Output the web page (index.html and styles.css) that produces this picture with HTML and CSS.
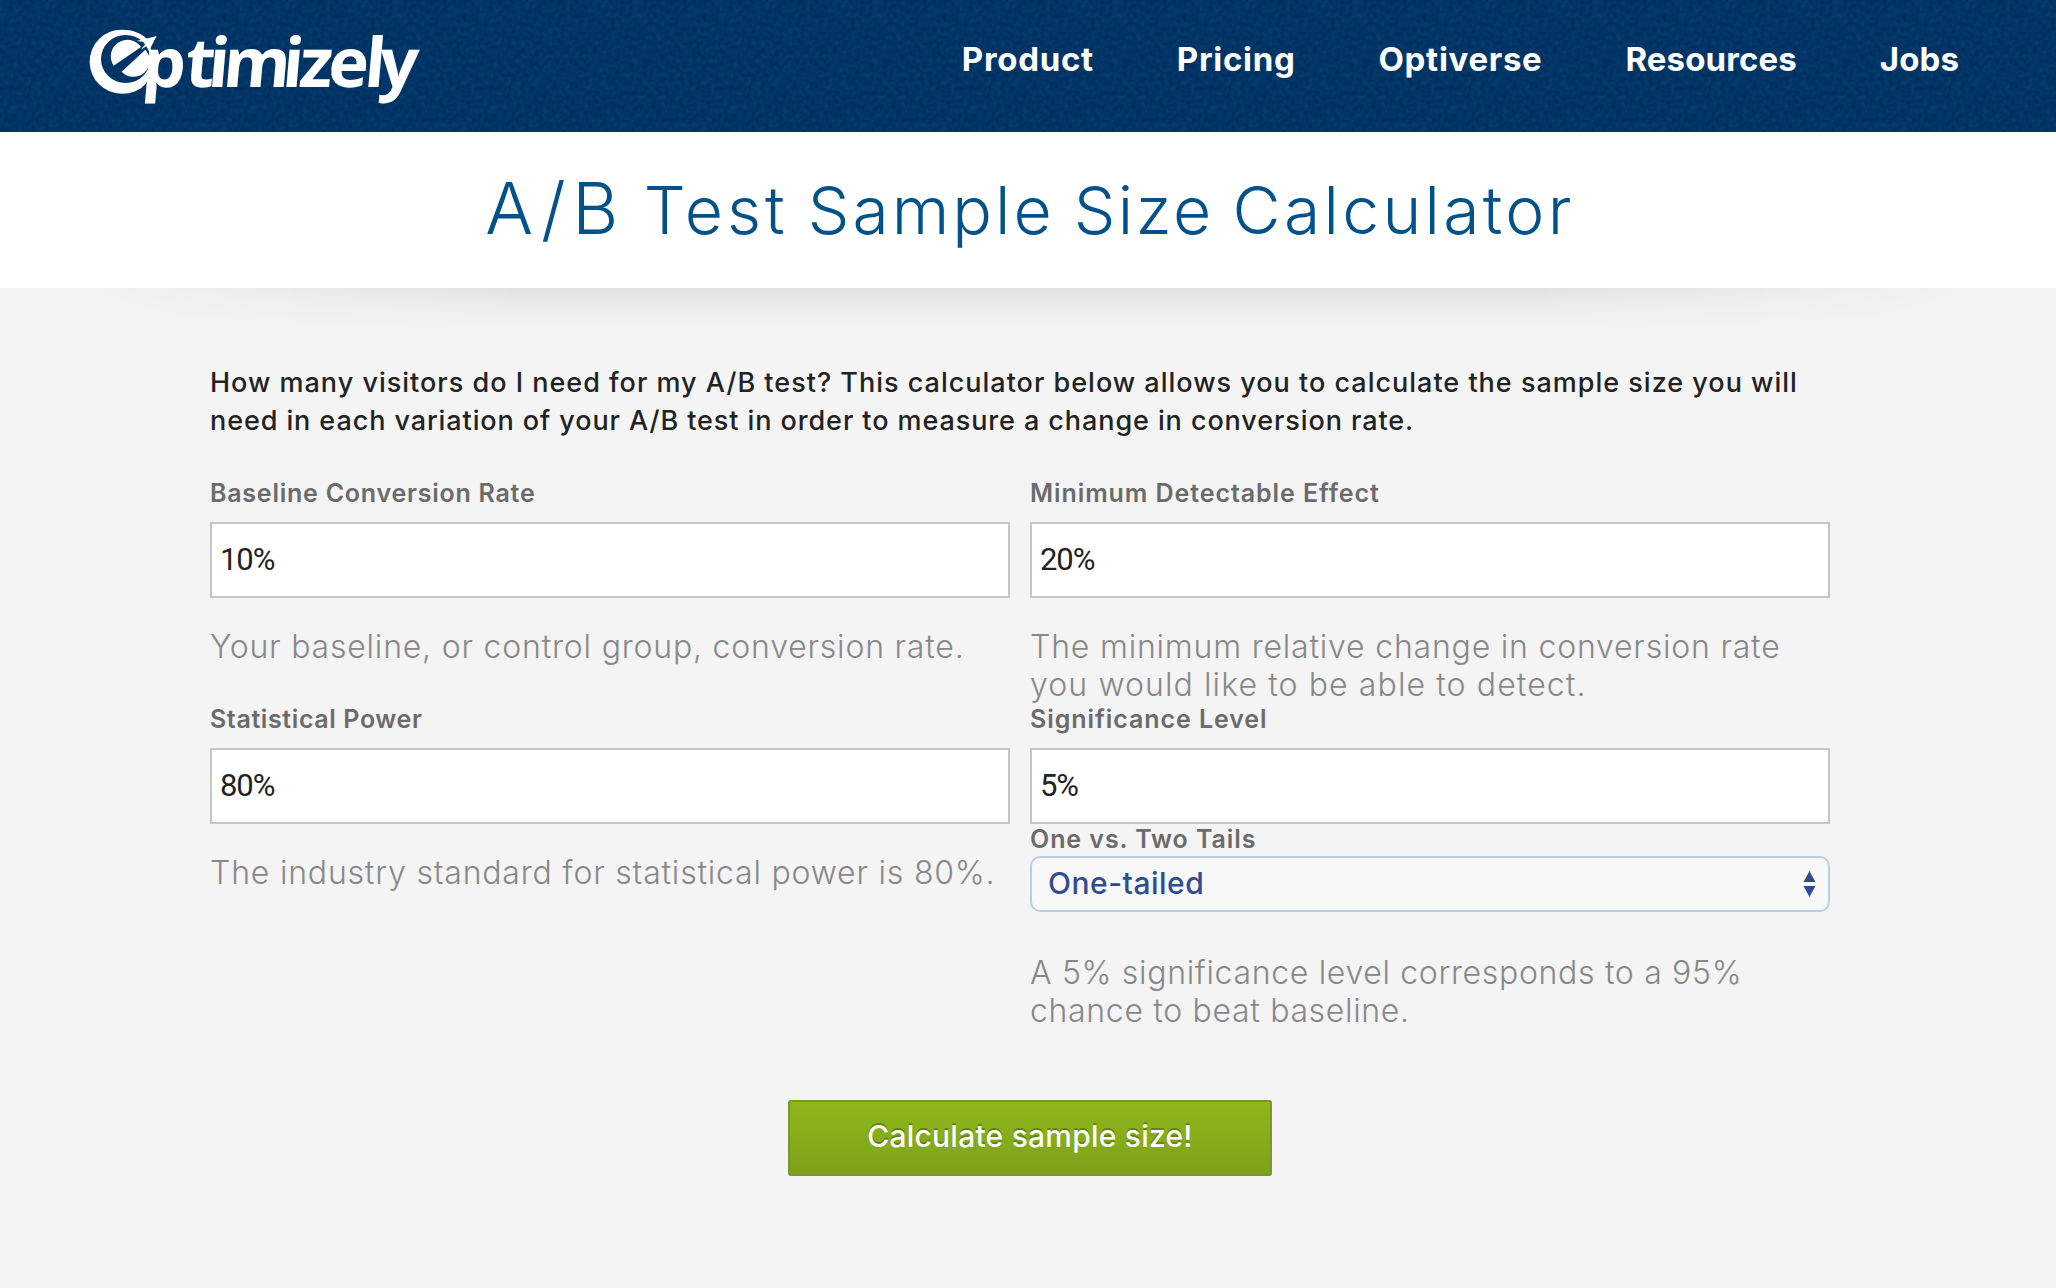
FILE: index.html
```html
<!DOCTYPE html>
<html lang="en">
<head>
<meta charset="utf-8">
<title>A/B Test Sample Size Calculator</title>
<link rel="stylesheet" href="styles.css">
</head>
<body>
<header class="topbar">
  <a class="logo" aria-label="Optimizely">
    <svg width="340" height="80" viewBox="55 55 1020 240">
      <path fill="#fff" fill-rule="evenodd" d="M150 60C182 60 209 70 226 88L254 80L236 112C250 150 245 190 222 222C205 242 180 252 150 252A96 96 0 0 1 150 60ZM162 76A74 72 0 1 0 162 220A74 72 0 1 0 162 76Z"/>
      <path fill="#fff" d="M126 168A47 47 0 0 1 208 112ZM150 186L221 120A47 47 0 0 1 150 186Z"/>
      <path fill="#fff" d="M194 94L254 80L232 124L224 110L207 120L226 98Z"/>
      <text class="logo-text" transform="translate(20.3 0) skewX(-5)" y="232" x="208 336 405 450 628 678 765 874 918">ptimizely</text>
    </svg>
  </a>
  <nav class="nav">
    <a>Product</a><a>Pricing</a><a>Optiverse</a><a class="tight">Resources</a><a class="tight">Jobs</a>
  </nav>
</header>
<section class="title"><h1><span class="ab">A/B</span> <span class="test">Test</span> Sample <span class="size">Size</span> <span class="calc">Calculator</span></h1></section>
<main class="main">
  <p class="intro">How many visitors do I need for my A/B test? This calculator below allows you to calculate the sample size you will<br><span class="intro-end">need in each variation of your A/B test in order to measure a change in conversion rate.</span></p>
  <form class="fields">
    <div class="field">
      <label for="baseline">Baseline Conversion Rate</label>
      <input id="baseline" value="10%">
      <p class="help">Your baseline, or control group, conversion rate.</p>
    </div>
    <div class="field">
      <label class="wide" for="effect">Minimum Detectable Effect</label>
      <input id="effect" value="20%">
      <p class="help">The minimum relative change in conversion rate<br><span class="loose">you would like to be able to detect.</span></p>
    </div>
    <div class="field">
      <label class="narrow" for="power">Statistical Power</label>
      <input id="power" value="80%">
      <p class="help">The industry standard for statistical power is 80%.</p>
    </div>
    <div class="field">
      <label class="wide" for="level">Significance Level</label>
      <input id="level" value="5%">
      <label class="wide short" for="tails">One vs. Two Tails</label>
      <div class="select">
        <select id="tails"><option>One-tailed</option><option>Two-tailed</option></select>
        <svg class="arrows" width="13" height="28" viewBox="0 0 13 28"><path fill="#324d8f" d="M6.5 1L12.5 12H.5ZM.5 16H12.5L6.5 27Z"/></svg>
      </div>
      <p class="help level-help">A 5% significance level corresponds to a 95%<br>chance to beat baseline.</p>
    </div>
  </form>
  <button class="submit" type="button">Calculate sample size!</button>
</main>
</body>
</html>
```
FILE: styles.css
```css
* { box-sizing: border-box; }
body { margin: 0; background: #f4f4f4; font-family: Inter, "Liberation Sans", sans-serif; color: #222; }
h1, p { margin: 0; font-weight: inherit; }

.topbar {
  height: 132px;
  padding: 0 97px 0 90px;
  display: flex;
  justify-content: space-between;
  align-items: flex-start;
  background: #003163 url("data:image/svg+xml,%3Csvg xmlns='http://www.w3.org/2000/svg' width='240' height='132'%3E%3Cfilter id='n' x='0' y='0' width='100%25' height='100%25'%3E%3CfeTurbulence type='fractalNoise' baseFrequency='.22' numOctaves='2' stitchTiles='stitch'/%3E%3CfeColorMatrix values='0 0 0 0 .05 0 0 0 0 .3 0 0 0 0 .5 .2 0 0 0 -.06'/%3E%3C/filter%3E%3Crect width='240' height='132' filter='url(%23n)'/%3E%3C/svg%3E");
}
.logo { display: block; padding-top: 28px; }
.logo svg { display: block; overflow: visible; }
.logo-text { font: 750 205px "Open Sans", sans-serif; fill: #fff; }
.nav { display: flex; gap: 83px; font-size: 33px; font-weight: 700; line-height: 118px; letter-spacing: .7px; color: #fff; }
.nav .tight { letter-spacing: .1px; }

.title { height: 156px; background: #fff; text-align: center; color: #005288; }
.title h1 { font-size: 66px; font-weight: 300; line-height: 156px; letter-spacing: 3px; word-spacing: -2.5px; padding-left: 4px; white-space: nowrap; }
.title .ab { font-size: 71px; line-height: 1; letter-spacing: 6.5px; }
.title .test { letter-spacing: 4px; }
.title .size { letter-spacing: 2.4px; }
.title .calc { letter-spacing: 3.3px; }

.main { position: relative; padding: 76px 206px 0 210px; height: 1000px; }
.main::before {
  content: "";
  position: absolute;
  left: 60px;
  right: 60px;
  top: 0;
  height: 44px;
  background: linear-gradient(rgba(0, 0, 0, .075), rgba(0, 0, 0, .035) 35%, rgba(0, 0, 0, .01) 75%, transparent);
  -webkit-mask: linear-gradient(90deg, transparent, #000 24%, #000 76%, transparent);
  mask: linear-gradient(90deg, transparent, #000 24%, #000 76%, transparent);
}
.intro { font-size: 27px; font-weight: 500; line-height: 38px; letter-spacing: 1px; white-space: nowrap; }
.intro-end { letter-spacing: .91px; }

.fields { display: grid; grid-template-columns: 800px 800px; grid-template-rows: 226px auto; column-gap: 20px; padding-top: 34px; }
.field { display: flex; flex-direction: column; }
.field > * { flex: none; }
label { height: 38px; line-height: 38px; margin-bottom: 10px; font-size: 25px; font-weight: 600; letter-spacing: .76px; color: #6b6b6b; }
label.wide { letter-spacing: .93px; }
label.narrow { letter-spacing: .61px; }
label.short { height: 30px; line-height: 30px; margin-bottom: 2px; }
input { height: 76px; border: 2px solid #c6c6c6; background: #fff; padding: 0 8px 2px; font: 400 31px Roboto, sans-serif; letter-spacing: -1.1px; color: #222; }
.help { margin-top: 30px; font-size: 32px; font-weight: 300; line-height: 38px; letter-spacing: .8px; color: #888; white-space: nowrap; }
.help .loose { letter-spacing: 1.1px; }
.level-help { margin-top: 42px; letter-spacing: .67px; }

.select { position: relative; }
.select select {
  display: block;
  appearance: none;
  width: 100%;
  height: 56px;
  padding: 0 40px 2px 16px;
  border: 2px solid #bccde2;
  border-radius: 10px;
  background: #f8f8f8;
  font: 500 30px Inter, sans-serif;
  letter-spacing: .5px;
  color: #324d8f;
}
.arrows { position: absolute; right: 14px; top: 14px; }

.submit {
  display: block;
  width: 484px;
  height: 76px;
  margin: 70px auto 0;
  padding: 0 0 5px;
  border: 2px solid #7a9533;
  border-radius: 3px;
  background: linear-gradient(#8fb71b, #7ea119);
  font: 500 30px Inter, sans-serif;
  letter-spacing: .23px;
  color: #fff;
  text-shadow: 0 -2px 0 #648313;
}
```
